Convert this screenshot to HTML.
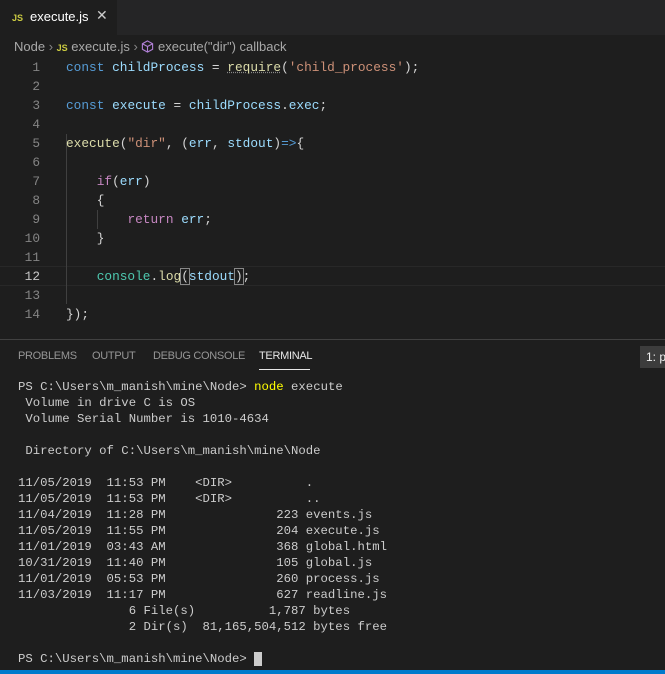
<!DOCTYPE html>
<html><head><meta charset="utf-8"><style>
*{margin:0;padding:0;box-sizing:border-box}
body{width:665px;height:674px;background:#1e1e1e;overflow:hidden;position:relative;font-family:"Liberation Sans",sans-serif}
.tabbar{position:absolute;left:0;top:0;width:665px;height:35px;background:#252526}
.tab{position:absolute;left:0;top:0;width:117px;height:35px;background:#1e1e1e;color:#fff;font-size:13px}
.js{color:#cbcb41;font-weight:bold;font-size:9px;position:absolute}
.bc{position:absolute;top:38px;left:14px;color:#a9a9a9;font-size:13px;white-space:nowrap;height:18px;line-height:18px}
.code{position:absolute;left:0;top:58px;font-family:"Liberation Mono",monospace;font-size:12.8px}
.ln{position:absolute;left:0;width:40px;text-align:right;color:#858585;height:19px;line-height:19px}
.cl{position:absolute;left:66px;color:#d4d4d4;white-space:pre;height:19px;line-height:19px}
.k{color:#569cd6}.v{color:#9cdcfe}.f{color:#dcdcaa}.s{color:#ce9178}.c{color:#c586c0}.t{color:#4ec9b0}
.term{position:absolute;left:18px;top:379px;font-family:"Liberation Mono",monospace;font-size:12.3px;line-height:16px;color:#cccccc;white-space:pre}
.pt{position:absolute;top:350px;font-size:11px;color:#969696;letter-spacing:-0.3px}
</style></head><body>
<div class="tabbar"></div>
<div class="tab"><span class="js" style="left:12px;top:13px">JS</span><span style="position:absolute;left:30px;top:9px">execute.js</span><span style="position:absolute;left:96px;top:7px;font-size:14px;color:#ccc">✕</span></div>
<div class="bc">Node <span style="color:#888">›</span> <span class="js" style="position:static;font-size:9px">JS</span> execute.js <span style="color:#888">›</span> <svg width="13" height="13" viewBox="0 0 14 14" style="vertical-align:-2px"><path d="M7 1L12.5 4v6L7 13 1.5 10V4z M1.5 4L7 7l5.5-3 M7 7v6" fill="none" stroke="#b180d7" stroke-width="1.2"/></svg> execute("dir") callback</div>
<div style="position:absolute;left:0;top:266px;width:665px;height:20px;border-top:1px solid #282828;border-bottom:1px solid #282828"></div>
<div style="position:absolute;left:66px;top:134px;width:1px;height:170px;background:#404040"></div>
<div style="position:absolute;left:97px;top:210px;width:1px;height:19px;background:#404040"></div>
<div class="code">
<div class="ln" style="top:0">1</div><div class="cl" style="top:0"><span class="k">const</span> <span class="v">childProcess</span> = <span class="f" style="text-decoration:underline dotted #888">require</span>(<span class="s">'child_process'</span>);</div>
<div class="ln" style="top:19px">2</div>
<div class="ln" style="top:38px">3</div><div class="cl" style="top:38px"><span class="k">const</span> <span class="v">execute</span> = <span class="v">childProcess</span>.<span class="v">exec</span>;</div>
<div class="ln" style="top:57px">4</div>
<div class="ln" style="top:76px">5</div><div class="cl" style="top:76px"><span class="f">execute</span>(<span class="s">"dir"</span>, (<span class="v">err</span>, <span class="v">stdout</span>)<span class="k">=&gt;</span>{</div>
<div class="ln" style="top:95px">6</div>
<div class="ln" style="top:114px">7</div><div class="cl" style="top:114px">    <span class="c">if</span>(<span class="v">err</span>)</div>
<div class="ln" style="top:133px">8</div><div class="cl" style="top:133px">    {</div>
<div class="ln" style="top:152px">9</div><div class="cl" style="top:152px">        <span class="c">return</span> <span class="v">err</span>;</div>
<div class="ln" style="top:171px">10</div><div class="cl" style="top:171px">    }</div>
<div class="ln" style="top:190px">11</div>
<div class="ln" style="top:209px;color:#c6c6c6">12</div><div class="cl" style="top:209px">    <span class="t">console</span>.<span class="f">log</span><span style="outline:1px solid #888">(</span><span class="v">stdout</span><span style="outline:1px solid #888">)</span>;</div>
<div class="ln" style="top:228px">13</div>
<div class="ln" style="top:247px">14</div><div class="cl" style="top:247px">});</div>
</div>
<div style="position:absolute;left:0;top:339px;width:665px;height:1px;background:#414141"></div>
<div class="pt" style="left:18px">PROBLEMS</div>
<div class="pt" style="left:92px">OUTPUT</div>
<div class="pt" style="left:153px">DEBUG CONSOLE</div>
<div class="pt" style="left:259px;color:#e7e7e7">TERMINAL</div>
<div style="position:absolute;left:259px;top:369px;width:51px;height:1px;background:#e7e7e7"></div>
<div style="position:absolute;left:640px;top:346px;width:25px;height:22px;background:#3c3c3c;color:#f0f0f0;font-size:12px;line-height:22px;padding-left:6px;white-space:nowrap">1: p</div>
<div class="term">PS C:\Users\m_manish\mine\Node&gt; <span style="color:#ffff00">node</span> execute
 Volume in drive C is OS
 Volume Serial Number is 1010-4634

 Directory of C:\Users\m_manish\mine\Node

11/05/2019  11:53 PM    &lt;DIR&gt;          .
11/05/2019  11:53 PM    &lt;DIR&gt;          ..
11/04/2019  11:28 PM               223 events.js
11/05/2019  11:55 PM               204 execute.js
11/01/2019  03:43 AM               368 global.html
10/31/2019  11:40 PM               105 global.js
11/01/2019  05:53 PM               260 process.js
11/03/2019  11:17 PM               627 readline.js
               6 File(s)          1,787 bytes
               2 Dir(s)  81,165,504,512 bytes free

PS C:\Users\m_manish\mine\Node&gt; <span style="background:#cccccc">&nbsp;</span></div>
<div style="position:absolute;left:0;top:670px;width:665px;height:4px;background:#007acc"></div>
</body></html>
